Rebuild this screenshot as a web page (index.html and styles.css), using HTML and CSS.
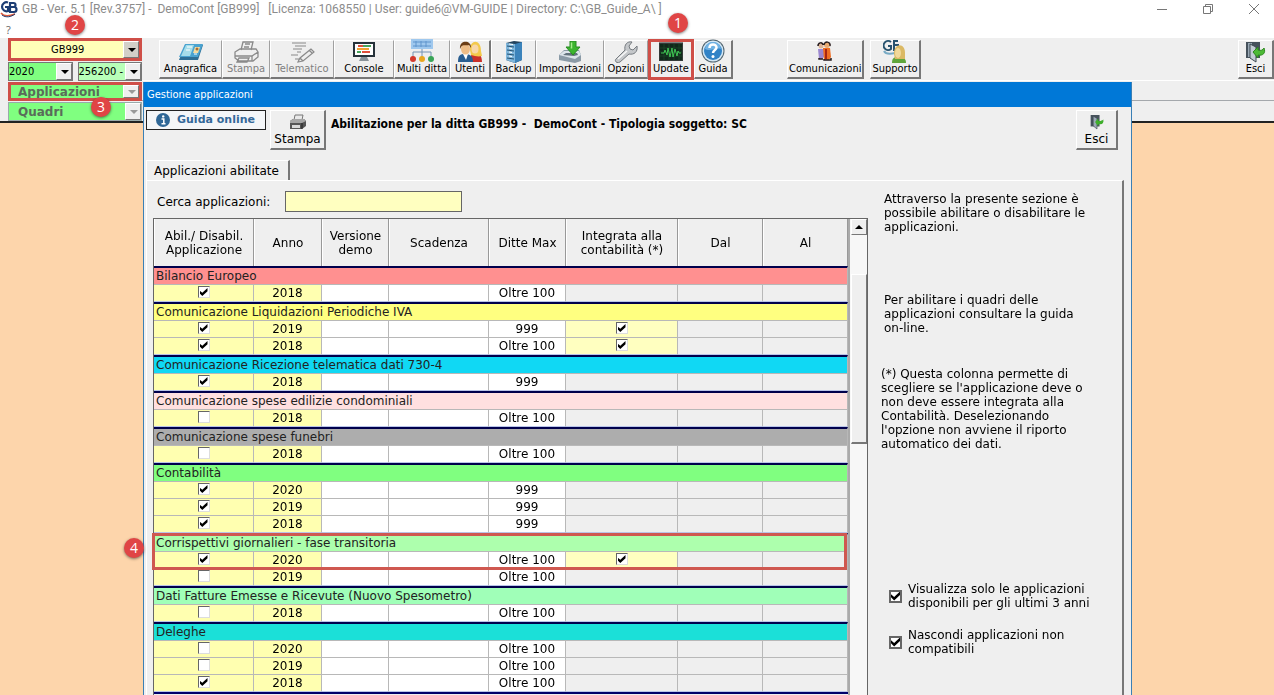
FILE: index.html
```html
<!DOCTYPE html>
<html lang="it">
<head>
    <meta charset="UTF-8">
    <meta name="viewport" content="width=device-width, initial-scale=1.0">
    <title>GB - Gestione applicazioni</title>
    <link rel="stylesheet" href="styles.css">
</head>
<body>

    <header class="titlebar">
        <svg class="logo" viewBox="0 0 18 17" width="18" height="17">
            <path d="M8 1.500A4.500 4.500 0 1 0 8 10V6H5M10 11V2h3.500a2 2 0 0 1 0 4H10h4a2.300 2.300 0 0 1 0 5z" fill="none" stroke="#1d3d73" stroke-width="2.200"/>
            <path d="M1 12c3 4 9 3 14 1" fill="none" stroke="#e05a3a" stroke-width="1.500"/>
            <path d="M2 14c4 3 9 2 13-1" fill="none" stroke="#1d3d73" stroke-width="1"/>
        </svg>
        <span class="caption">GB - Ver. 5.1 [Rev.3757] -&nbsp; DemoCont [GB999] &nbsp; [Licenza: 1068550 | User: guide6@VM-GUIDE | Directory: C:\GB_Guide_A\ ]</span>
        <div class="window-buttons">
            <button aria-label="Riduci"><svg width="12" height="12" viewBox="0 0 12 12"><path d="M1 6.500h10"/></svg></button>
            <button aria-label="Ripristina"><svg width="12" height="12" viewBox="0 0 12 12"><path d="M1.500 3.500h7v7h-7zM3.500 3.500v-2h7v7h-2"/></svg></button>
            <button aria-label="Chiudi"><svg width="12" height="12" viewBox="0 0 12 12"><path d="M1 1l10 10M11 1L1 11"/></svg></button>
        </div>
    </header>
    <nav class="menubar"><a href="#">?</a></nav>

    <div class="top">
        <div class="selectors">
            <div class="combo ditta">
                <select aria-label="Ditta"><option>GB999</option></select>
                <span class="badge badge-ditta">2</span>
            </div>
            <div class="pair">
                <div class="combo anno"><select aria-label="Anno"><option>2020</option></select></div>
                <div class="combo attivita"><select aria-label="Attività"><option>256200 -</option></select></div>
            </div>
            <div class="combo menu marked">
                <select aria-label="Applicazioni"><option>Applicazioni</option></select>
                <span class="badge badge-app">3</span>
            </div>
            <div class="combo menu"><select aria-label="Quadri"><option>Quadri</option></select></div>
        </div>

        <div class="bars">
            <div class="toolbar">
                <div class="tools">
                    <button class="tool">
                        <svg width="26" height="22" viewBox="0 0 26 22"><path d="M7 4h18l-5 15H1z" fill="#2d6f96"/><path d="M7 3h18l-5 13H1z" fill="#4aa3d0"/><path d="M8 4h8l-4 11H3z" fill="#a5ddea"/><path d="M9 6h5M8 9h4M16 13h3" stroke="#fff"/><path d="M17 6h5l-2 6h-5z" fill="#f4dca0"/><circle cx="19" cy="8" r="1.500" fill="#a86d35"/></svg>
                        Anagrafica
                    </button>
                    <button class="tool" disabled>
                        <svg width="26" height="22" viewBox="0 0 26 22" fill="none" stroke="#8a8a8a" stroke-width="1.300"><path d="M8 9l2-8h10l-2 8M12 3h5M11 6h5M2 11l5-3h16l2 3-6 4H2zM2 11v6l4 3h14l5-4v-5M19 15v5M6 17h10l-2 4H4z"/></svg>
                        Stampa
                    </button>
                    <button class="tool" disabled>
                        <svg width="26" height="22" viewBox="0 0 26 22" fill="none" stroke="#8a8a8a" stroke-width="1.200"><path d="M3 2h14M6 5h11M4 8h9M8 11h4M2 14h7M6 18h4M22 8L11 17l-2 4 5-1L25 11zM20 9l3 3M11 17l3 3"/></svg>
                        Telematico
                    </button>
                    <button class="tool">
                        <svg width="24" height="22" viewBox="0 0 24 22"><path d="M1 1h22v15H1z" fill="#26323a"/><path d="M3 3h18v11H3z" fill="#fff"/><path d="M9 16h6l2 4H7z" fill="#8a9299"/><path d="M6 5h6M10 11h8" stroke="#e0503c" stroke-width="2"/><path d="M11 5h8M5 11h4" stroke="#49a65c" stroke-width="2"/><path d="M5 8h12" stroke="#f0a030" stroke-width="2"/></svg>
                        Console
                    </button>
                    <button class="tool">
                        <svg width="26" height="24" viewBox="0 0 26 24"><path d="M2 0h22v10H2z" fill="#9fc8ee"/><path d="M4 3h18M4 7h18M7 2v6M12 2v6M17 2v6" stroke="#5e94cc"/><path d="M13 10v9M4 19v-6h18v6" fill="none" stroke="#7493b2"/><circle cx="4" cy="20" r="3" fill="#d4392d"/><circle cx="13" cy="20" r="3" fill="#e9a820"/><circle cx="22" cy="20" r="3" fill="#39a457"/></svg>
                        Multi ditta
                    </button>
                    <button class="tool edge">
                        <svg width="26" height="22" viewBox="0 0 26 22"><path d="M14 16c0-5 3-4 3-6 4 2 8 3 8 11H14z" fill="#c9302a"/><path d="M13 9c0-11 11-11 11 1l1 5c-4 1-7 0-11-1z" fill="#f3c94a"/><ellipse cx="18" cy="8" rx="3.500" ry="4.500" fill="#f8d7a8"/><path d="M1 21c0-7 2-8 7-8s8 2 8 8z" fill="#285d90"/><path d="M6 13h5l-2 6z" fill="#fff"/><ellipse cx="8.500" cy="8" rx="4.500" ry="5.500" fill="#eebd87"/><path d="M3 8C2-2 15-1 14 7l-2-3C9 5 6 3 4 6z" fill="#6b3d16"/></svg>
                        Utenti
                    </button>
                    <button class="tool">
                        <svg width="20" height="22" viewBox="0 0 20 22"><path d="M2 2l8-2 8 1v18l-7 3-9-3z" fill="#24445e"/><path d="M11 3l7-2v18l-7 3z" fill="#3b83bb"/><path d="M2 2l9 1v19l-9-3z" fill="#7fb6dc"/><path d="M3 5l7 1M3 9l7 1M3 13l7 1M3 17l7 1" stroke="#23506f"/><path d="M5 3l4 .5M5 7l3 .5M5 11l3 .5M5 15l3 .5" stroke="#fff"/></svg>
                        Backup
                    </button>
                    <button class="tool">
                        <svg width="24" height="22" viewBox="0 0 24 22"><path d="M1 14l5-5h15l2 5v6l-6 2-16-3z" fill="#8a9aa6"/><path d="M1 14l5-4h15l2 4-6 4z" fill="#dce4ea"/><path d="M5 14l3-2h11l1 2-4 1z" fill="#62717c"/><path d="M12 0h6v6h4l-7 8-7-8h4z" fill="#3bb52e" stroke="#268a20"/><path d="M13.500 1.500v6" stroke="#a4ed8a" stroke-width="1.500"/></svg>
                        Importazioni
                    </button>
                    <button class="tool">
                        <svg width="24" height="22" viewBox="0 0 24 22"><path d="M2 18l9-9c-1-5 2-9 7-8l-3 4 1 3 3 1 4-4c1 6-3 9-8 8l-9 8c-3 2-6-1-4-3z" fill="#c4c7ca" stroke="#777c81"/><path d="M4 18l9-8" stroke="#f8f8f8" stroke-width="1.500"/></svg>
                        Opzioni
                    </button>
                    <button class="tool update">
                        <svg width="24" height="20" viewBox="0 0 24 20"><path d="M0 0h24v20H0z" fill="#343a38"/><path d="M0 0h24v2H0z" fill="#7c8582"/><path d="M1 3h22v16H1z" fill="#10281a"/><path d="M1 7h22M1 11h22M1 15h22M5 3v16M10 3v16M15 3v16M20 3v16" stroke="#1e4a2b" stroke-width=".7"/><path d="M2 12h3l1-3 2 5 1-7 2 9 2-9 1 9 2-8 2 7 1-5 1 2h2" fill="none" stroke="#3fc653" stroke-width="1"/></svg>
                        Update
                        <span class="badge badge-update">1</span>
                    </button>
                    <button class="tool edge">
                        <svg width="24" height="24" viewBox="0 0 24 24"><circle cx="12" cy="12" r="11.500" fill="#51646f"/><circle cx="12" cy="12" r="10.500" fill="#d3e7f5"/><circle cx="12" cy="12" r="9" fill="#3182c6"/><path d="M4 10a8 7 0 0 1 16 0c-5-2-11 3-16 0" fill="#71b3e4"/><path d="M8.500 9c0-4.500 7-4.500 7-.5 0 2.500-3.500 2.500-3.500 5.500" fill="none" stroke="#fff" stroke-width="2.500"/><circle cx="12" cy="17.500" r="1.500" fill="#fff"/></svg>
                        Guida
                    </button>
                </div>
                <div class="contacts">
                    <button class="tool edge">
                        <svg width="16" height="20" viewBox="0 0 16 20"><path d="M1 8h6v8l-2 2H2z" fill="#9b87d0"/><path d="M6 7h7l1 9-2 3H7z" fill="#ee6c22"/><path d="M9 8v10" stroke="#a82412" stroke-width="2"/><circle cx="4" cy="5" r="2.500" fill="#ddb496"/><circle cx="10" cy="4" r="3" fill="#e9ab73"/><path d="M1 5c0-4 5-4 5-1M7 4c0-4 7-4 6 1M2 17v1h4M7 18v1h7v-2" fill="none" stroke="#251a1c" stroke-width="1.500"/></svg>
                        Comunicazioni
                    </button>
                    <button class="tool edge">
                        <svg width="24" height="24" viewBox="0 0 24 24"><path d="M8 3a4.500 4.500 0 1 0 0 7V7H5M11 12V2h4M11 6h5" fill="none" stroke="#28536f" stroke-width="2"/><path d="M1 12c2 4 7 3 11 2" fill="none" stroke="#78aac4" stroke-width="2"/><path d="M9 24c0-6 3-6 7-6s7 1 7 6z" fill="#60a53c"/><path d="M11 15c0-12 12-11 11 0v5H12z" fill="#dbb965"/><ellipse cx="15" cy="14" rx="3" ry="5" fill="#f0d89a"/></svg>
                        Supporto
                    </button>
                </div>
                <button class="tool edge exit">
                    <svg width="22" height="22" viewBox="0 0 22 22"><path d="M1 1h14v16H1z" fill="#46525c"/><path d="M3 2h4v14H3z" fill="#99a8b5"/><path d="M5 3l6 3v15l-6-4z" fill="#c3ccd4" stroke="#3d4850"/><path d="M8 11l5-5v3c3 1 5 0 6-2 2 5-1 8-6 7v3z" fill="#4dba35" stroke="#2d8620"/></svg>
                    Esci
                </button>
            </div>
            <div class="strip ruled"></div>
            <div class="strip"></div>
        </div>
    </div>

    <main class="desktop"></main>

    <section class="dialog">
        <h1 class="dialog-title">Gestione applicazioni</h1>

        <div class="dialog-head">
            <a class="guide" href="#">
                <svg width="14" height="14" viewBox="0 0 14 14"><circle cx="7" cy="7" r="7" fill="#2f6796"/><path d="M5.500 6h2.300v4.500M5.500 10.800h4" fill="none" stroke="#fff" stroke-width="1.500"/><circle cx="7.200" cy="3.400" r="1.200" fill="#fff"/></svg>
                Guida online
            </a>
            <button class="big-button">
                <svg width="18" height="16" viewBox="0 0 18 16"><path d="M5 6l1-5h8l-1 5z" fill="#e9e9e9" stroke="#777"/><path d="M1 7l3-2h11l2 2v5l-4 3H1z" fill="#555"/><path d="M1 7l3-2h11l2 2-4 2H1z" fill="#a6a6a6"/><path d="M3 11h8v3H3z" fill="#d9d9d9"/><path d="M13 9v6" stroke="#222"/></svg>
                Stampa
            </button>
            <h2>Abilitazione per la ditta GB999 -&nbsp; DemoCont - Tipologia soggetto: SC</h2>
            <button class="big-button close">
                <svg width="14" height="16" viewBox="0 0 22 24"><path d="M1 1h14v18H1z" fill="#46525c"/><path d="M5 3l6 3v17l-6-5z" fill="#9caab6" stroke="#3d4850"/><path d="M8 12l5-6v4c3 1 5 0 8-2 1 6-2 9-8 7v4z" fill="#3fae2c"/></svg>
                Esci
            </button>
        </div>

        <div class="tabs"><button class="tab">Applicazioni abilitate</button></div>

        <div class="panel">
            <div class="list">
                <div class="search">
                    <label for="cerca">Cerca applicazioni:</label>
                    <input type="text" id="cerca" autofocus>
                </div>
                <div class="grid">
                    <table>
                        <colgroup>
                            <col class="c-abil"><col class="c-anno"><col class="c-demo"><col class="c-scad"><col class="c-max"><col class="c-int"><col class="c-date"><col class="c-date">
                        </colgroup>
                        <thead>
                            <tr><th>Abil./ Disabil. Applicazione</th><th>Anno</th><th>Versione demo</th><th>Scadenza</th><th>Ditte Max</th><th>Integrata alla contabilità (*)</th><th>Dal</th><th>Al</th></tr>
                        </thead>
                        <tbody>
                            <tr class="group red"><td colspan="8">Bilancio Europeo</td></tr>
                            <tr><td><input type="checkbox" aria-label="Abilita 2018" checked></td><td>2018</td><td></td><td></td><td>Oltre 100</td><td></td><td></td><td></td></tr>
                        </tbody>
                        <tbody>
                            <tr class="group yellow"><td colspan="8">Comunicazione Liquidazioni Periodiche IVA</td></tr>
                            <tr><td><input type="checkbox" aria-label="Abilita 2019" checked></td><td>2019</td><td></td><td></td><td>999</td><td class="on"><input type="checkbox" aria-label="Integrata 2019" checked></td><td></td><td></td></tr>
                            <tr><td><input type="checkbox" aria-label="Abilita 2018" checked></td><td>2018</td><td></td><td></td><td>Oltre 100</td><td class="on"><input type="checkbox" aria-label="Integrata 2018" checked></td><td></td><td></td></tr>
                        </tbody>
                        <tbody>
                            <tr class="group cyan"><td colspan="8">Comunicazione Ricezione telematica dati 730-4</td></tr>
                            <tr><td><input type="checkbox" aria-label="Abilita 2018" checked></td><td>2018</td><td></td><td></td><td>999</td><td></td><td></td><td></td></tr>
                        </tbody>
                        <tbody>
                            <tr class="group pink"><td colspan="8">Comunicazione spese edilizie condominiali</td></tr>
                            <tr><td><input type="checkbox" aria-label="Abilita 2018"></td><td>2018</td><td></td><td></td><td>Oltre 100</td><td></td><td></td><td></td></tr>
                        </tbody>
                        <tbody>
                            <tr class="group gray"><td colspan="8">Comunicazione spese funebri</td></tr>
                            <tr><td><input type="checkbox" aria-label="Abilita 2018"></td><td>2018</td><td></td><td></td><td>Oltre 100</td><td></td><td></td><td></td></tr>
                        </tbody>
                        <tbody>
                            <tr class="group green"><td colspan="8">Contabilità</td></tr>
                            <tr><td><input type="checkbox" aria-label="Abilita 2020" checked></td><td>2020</td><td></td><td></td><td>999</td><td></td><td></td><td></td></tr>
                            <tr><td><input type="checkbox" aria-label="Abilita 2019" checked></td><td>2019</td><td></td><td></td><td>999</td><td></td><td></td><td></td></tr>
                            <tr><td><input type="checkbox" aria-label="Abilita 2018" checked></td><td>2018</td><td></td><td></td><td>999</td><td></td><td></td><td></td></tr>
                        </tbody>
                        <tbody>
                            <tr class="group lime"><td colspan="8">Corrispettivi giornalieri - fase transitoria<span class="frame"></span><span class="badge badge-row">4</span></td></tr>
                            <tr><td><input type="checkbox" aria-label="Abilita 2020" checked></td><td>2020</td><td></td><td></td><td>Oltre 100</td><td class="on"><input type="checkbox" aria-label="Integrata 2020" checked></td><td></td><td></td></tr>
                            <tr><td><input type="checkbox" aria-label="Abilita 2019"></td><td>2019</td><td></td><td></td><td>Oltre 100</td><td></td><td></td><td></td></tr>
                        </tbody>
                        <tbody>
                            <tr class="group mint"><td colspan="8">Dati Fatture Emesse e Ricevute (Nuovo Spesometro)</td></tr>
                            <tr><td><input type="checkbox" aria-label="Abilita 2018"></td><td>2018</td><td></td><td></td><td>Oltre 100</td><td></td><td></td><td></td></tr>
                        </tbody>
                        <tbody>
                            <tr class="group teal"><td colspan="8">Deleghe</td></tr>
                            <tr><td><input type="checkbox" aria-label="Abilita 2020"></td><td>2020</td><td></td><td></td><td>Oltre 100</td><td></td><td></td><td></td></tr>
                            <tr><td><input type="checkbox" aria-label="Abilita 2019"></td><td>2019</td><td></td><td></td><td>Oltre 100</td><td></td><td></td><td></td></tr>
                            <tr><td><input type="checkbox" aria-label="Abilita 2018" checked></td><td>2018</td><td></td><td></td><td>Oltre 100</td><td></td><td></td><td></td></tr>
                        </tbody>
                    </table>
                    <div class="scrollbar">
                        <button class="scroll-up" aria-label="Su"></button>
                        <div class="thumb"></div>
                    </div>
                </div>
            </div>

            <aside class="notes">
                <p class="intro">Attraverso la presente sezione è possibile abilitare o disabilitare le applicazioni.</p>
                <p class="help">Per abilitare i quadri delle applicazioni consultare la guida <span class="nowrap">on-line.</span></p>
                <p class="asterisk">(*) Questa colonna permette di scegliere se l'applicazione deve o non deve essere integrata alla Contabilità. Deselezionando l'opzione non avviene il riporto automatico dei dati.</p>
                <label class="option"><input type="checkbox" checked> Visualizza solo le applicazioni disponibili per gli ultimi 3 anni</label>
                <label class="option"><input type="checkbox" checked> Nascondi applicazioni non compatibili</label>
            </aside>
        </div>
    </section>

</body>
</html>
```
FILE: styles.css
```css
* {
    margin: 0;
    padding: 0;
    box-sizing: border-box;
}
body {
    font-family: "DejaVu Sans", Verdana, sans-serif;
    font-size: 12px;
    line-height: 14px;
    color: #000;
    background-color: #efefef;
    height: 100vh;
    display: flex;
    flex-direction: column;
    overflow: hidden;
    position: relative;
}
button, input, select {
    font: inherit;
    color: inherit;
}
.nowrap {
    white-space: nowrap;
}

/* title bar */
.titlebar {
    display: flex;
    align-items: center;
    height: 18px;
    gap: 4px;
    background-color: #fff;
    color: #8c8c8c;
    font-family: Roboto, "Segoe UI", sans-serif;
    white-space: nowrap;
}
.window-buttons {
    margin-left: auto;
    display: flex;
    gap: 34px;
    padding-right: 14px;
}
.window-buttons button {
    display: flex;
    border: none;
    background: none;
}
.window-buttons svg {
    fill: none;
    stroke: #777;
}
.menubar {
    height: 20px;
    padding: 5px 6px;
    background-color: #fff;
    font-family: "Open Sans", "Segoe UI", sans-serif;
    font-size: 11px;
}
.menubar a {
    color: #666;
    text-decoration: none;
}

/* selectors and toolbar */
.top {
    display: flex;
    border-bottom: 2px solid #222;
}
.selectors {
    width: 142px;
    padding-left: 8px;
    display: flex;
    flex-direction: column;
    gap: 1px;
    font-family: "DejaVu Sans Condensed", Tahoma, sans-serif;
    font-size: 11px;
}
.pair {
    display: flex;
    gap: 5px;
}
.combo {
    position: relative;
    height: 19px;
    border: 1px solid #777;
}
.combo select {
    appearance: none;
    width: 100%;
    height: 100%;
    border: none;
    background: none;
    display: block;
    opacity: 1;
}
.combo::before {
    content: "";
    position: absolute;
    right: 0;
    top: 0;
    bottom: 0;
    width: 14px;
    background-color: #efefef;
    border: 1px solid;
    border-color: #fff #777 #777 #fff;
    pointer-events: none;
}
.combo::after {
    content: "";
    position: absolute;
    right: 3px;
    top: calc(50% - 2px);
    border: 4px solid transparent;
    border-top-color: #000;
    border-bottom: none;
    pointer-events: none;
}
.ditta {
    height: 23px;
    border: 3px solid #cf4f48;
    background-color: #ffffb8;
}
.ditta::before {
    background-color: #d2cfc8;
}
.ditta select {
    padding-left: 40px;
}
.anno {
    flex: 1;
    background-color: #80ff80;
}
.attivita {
    flex: 1;
    background-color: #b8ffb8;
}
.menu {
    background-color: #80ff80;
    border-color: #9aa;
    font: bold 12px/14px "DejaVu Sans", Verdana, sans-serif;
    color: #5a6c5a;
}
.menu select {
    padding-left: 9px;
}
.menu::after {
    border-top-color: #999;
}
.marked {
    border: 3px solid #cf4f48;
}
.marked select {
    padding-left: 7px;
}
.bars {
    flex: 1;
}
.toolbar {
    display: flex;
    height: 43px;
    padding: 2px 0 2px 17px;
    border-bottom: 1px solid #fff;
}
.tools {
    display: grid;
    grid-template-columns: 63px 48px 64px 60px 56px 41px 45px 68px 44px 46px 39px;
}
.contacts {
    display: flex;
    gap: 6px;
    margin-left: 54px;
}
.tool {
    position: relative;
    display: flex;
    flex-direction: column;
    align-items: center;
    justify-content: flex-end;
    height: 39px;
    padding: 0 1px 2px;
    background-color: #efefef;
    border: 1px solid;
    border-color: #fff #a0a0a0 #777 #fff;
    border-bottom-width: 2px;
    font-family: "DejaVu Sans Condensed", Tahoma, sans-serif;
    font-size: 11px;
    line-height: 12px;
    white-space: nowrap;
}
.tool svg {
    margin-bottom: auto;
    flex-shrink: 0;
}
.tool:disabled {
    color: #808080;
}
.edge {
    border-right: 2px solid #777;
}
.update::after {
    content: "";
    position: absolute;
    inset: -2px -1px -3px;
    border: 3px solid #cf4f48;
}
.exit {
    width: 36px;
    margin-left: auto;
}
.strip {
    height: 20px;
}
.ruled {
    border-bottom: 1px solid #a4a8ac;
}
.desktop {
    flex: 1;
    background-color: #fdd5ab;
}

/* numbered markers */
.badge {
    position: absolute;
    z-index: 2;
    width: 20px;
    height: 20px;
    border-radius: 50%;
    background-color: #e04545;
    box-shadow: 0 1px 3px rgba(0, 0, 0, 0.5);
    color: #fff;
    font: 14px/20px "Open Sans", sans-serif;
    text-align: center;
}
.badge-update {
    left: 19px;
    top: -28px;
}
.badge-ditta {
    left: 54px;
    top: -26px;
}
.badge-app {
    left: 80px;
    top: 12px;
}
.badge-row {
    left: -30px;
    top: 3px;
}
.frame {
    position: absolute;
    left: -2px;
    right: 0;
    top: -2px;
    height: 37px;
    border: 3px solid #cf5850;
    pointer-events: none;
}

/* dialog window */
.dialog {
    position: absolute;
    left: 143px;
    right: 142px;
    top: 82px;
    bottom: 0;
    display: flex;
    flex-direction: column;
    background-color: #efefef;
    border: 1px solid #3a7fb5;
    border-width: 0 1px;
}
.dialog-title {
    flex-shrink: 0;
    padding-left: 3px;
    background-color: #0078d7;
    color: #fff;
    font: 11px/25px "DejaVu Sans Condensed", Tahoma, sans-serif;
}
.dialog-head {
    display: flex;
    align-items: flex-start;
    padding: 3px 13px 0 2px;
}
.guide {
    display: flex;
    align-items: center;
    gap: 7px;
    width: 120px;
    height: 20px;
    padding-left: 9px;
    border: 1px solid #222;
    background-color: #f4f6f8;
    color: #35699a;
    font-size: 11px;
    font-weight: bold;
    text-decoration: none;
    white-space: nowrap;
}
.dialog-head h2 {
    margin: 7px 0 0 5px;
    font: bold 12px/14px "DejaVu Sans Condensed", Tahoma, sans-serif;
}
.big-button {
    display: flex;
    flex-direction: column;
    align-items: center;
    justify-content: space-between;
    width: 56px;
    height: 40px;
    margin-left: 4px;
    padding: 3px 0 2px;
    background-color: #efefef;
    border: 1px solid;
    border-color: #fff #777 #777 #fff;
    border-right-width: 2px;
    border-bottom-width: 2px;
}
.close {
    width: 42px;
    margin-left: auto;
}
.tabs {
    padding: 10px 0 0 2px;
}
.tab {
    display: block;
    height: 20px;
    padding: 0 9px 0 7px;
    background-color: #efefef;
    border: 1px solid #fff;
    border-right: 2px solid #777;
    border-bottom: none;
}
.panel {
    flex: 1;
    min-height: 0;
    display: flex;
    margin: 0 7px 0 2px;
    border: 1px solid #fff;
    border-right: 2px solid #777;
    border-bottom: none;
}
.list {
    flex: 1;
    display: flex;
    flex-direction: column;
    padding: 10px 0 0 6px;
}
.search {
    display: flex;
    align-items: center;
    gap: 15px;
    padding-left: 4px;
    margin-bottom: 6px;
}
.search input {
    width: 177px;
    height: 21px;
    padding: 0 2px;
    border: 1px solid #666;
    background-color: #ffffc0;
    outline: none;
}
.grid {
    flex: 1;
    min-height: 0;
    display: flex;
    border: 1px solid #666;
    border-bottom: none;
}

/* applications table */
table {
    flex: 1;
    align-self: flex-start;
    table-layout: fixed;
    border-collapse: separate;
    border-spacing: 0;
    border-bottom: 2px solid #00006a;
}
.c-abil, .c-scad {
    width: 100px;
}
.c-anno {
    width: 68px;
}
.c-demo {
    width: 67px;
}
.c-max {
    width: 77px;
}
.c-int {
    width: 112px;
}
.c-date {
    width: 85px;
}
th {
    height: 47px;
    padding: 0 4px;
    font-weight: normal;
    border-right: 1px solid #999;
    border-left: 1px solid #fff;
}
td {
    height: 17px;
    line-height: 16px;
    text-align: center;
    vertical-align: middle;
    border-right: 1px solid #b8b8b8;
    border-bottom: 1px solid #b8b8b8;
}
td:nth-child(-n+2) {
    background-color: #ffffb0;
}
td:nth-child(n+3):nth-child(-n+5) {
    background-color: #fff;
}
td.on {
    background-color: #ffffc0;
}
tbody tr:last-child td {
    border-bottom-color: #b9c4e8;
}
tr.group td {
    position: relative;
    height: 19px;
    padding-left: 2px;
    text-align: left;
    color: #222;
    border-top: 2px solid #00004c;
}
tr.red td { background-color: #ff9090; }
tr.yellow td { background-color: #ffff80; }
tr.cyan td { background-color: #10d8f4; }
tr.pink td { background-color: #ffe0e0; }
tr.gray td { background-color: #adadad; }
tr.green td { background-color: #80ff80; }
tr.lime td { background-color: #adffad; }
tr.mint td { background-color: #a0ffb8; }
tr.teal td { background-color: #1be0d8; }

input[type="checkbox"] {
    appearance: none;
    display: block;
    position: relative;
    width: 12px;
    height: 12px;
    margin: 0 auto;
    background-color: #fff;
    border: 1px solid;
    border-color: #666 #ddd #ddd #666;
    flex-shrink: 0;
}
td input[type="checkbox"] {
    margin-bottom: 2px;
}
input[type="checkbox"]:checked::before {
    content: "";
    position: absolute;
    inset: 1px;
    background-color: #000;
    clip-path: polygon(0 30%, 35% 60%, 100% 0, 100% 40%, 35% 100%, 0 65%);
}

.scrollbar {
    width: 19px;
    padding-left: 1px;
    border-left: 2px solid #aaa;
    background-color: #f7f7f7;
}
.scroll-up {
    display: flex;
    align-items: center;
    justify-content: center;
    width: 100%;
    height: 16px;
    background-color: #efefef;
    border: 1px solid;
    border-color: #fff #777 #777 #fff;
}
.scroll-up::before {
    content: "";
    border: 4px solid transparent;
    border-bottom-color: #000;
    border-top: none;
}
.thumb {
    height: 170px;
    margin-top: 39px;
    background-color: #efefef;
    border: 1px solid;
    border-color: #fff #777 #777 #fff;
    border-bottom-width: 2px;
}

/* notes column */
.notes {
    width: 254px;
    padding: 11px 20px 0 16px;
}
.intro {
    margin-bottom: 59px;
}
.help {
    margin-bottom: 32px;
}
.asterisk {
    margin: 0 0 131px -3px;
}
.option {
    display: flex;
    align-items: center;
    gap: 6px;
    margin: 0 -6px 18px 5px;
}
.option input[type="checkbox"] {
    width: 13px;
    height: 13px;
    margin: 0;
    border: 2px solid #666;
}
.option input[type="checkbox"]:checked::before {
    inset: 0;
}
```
